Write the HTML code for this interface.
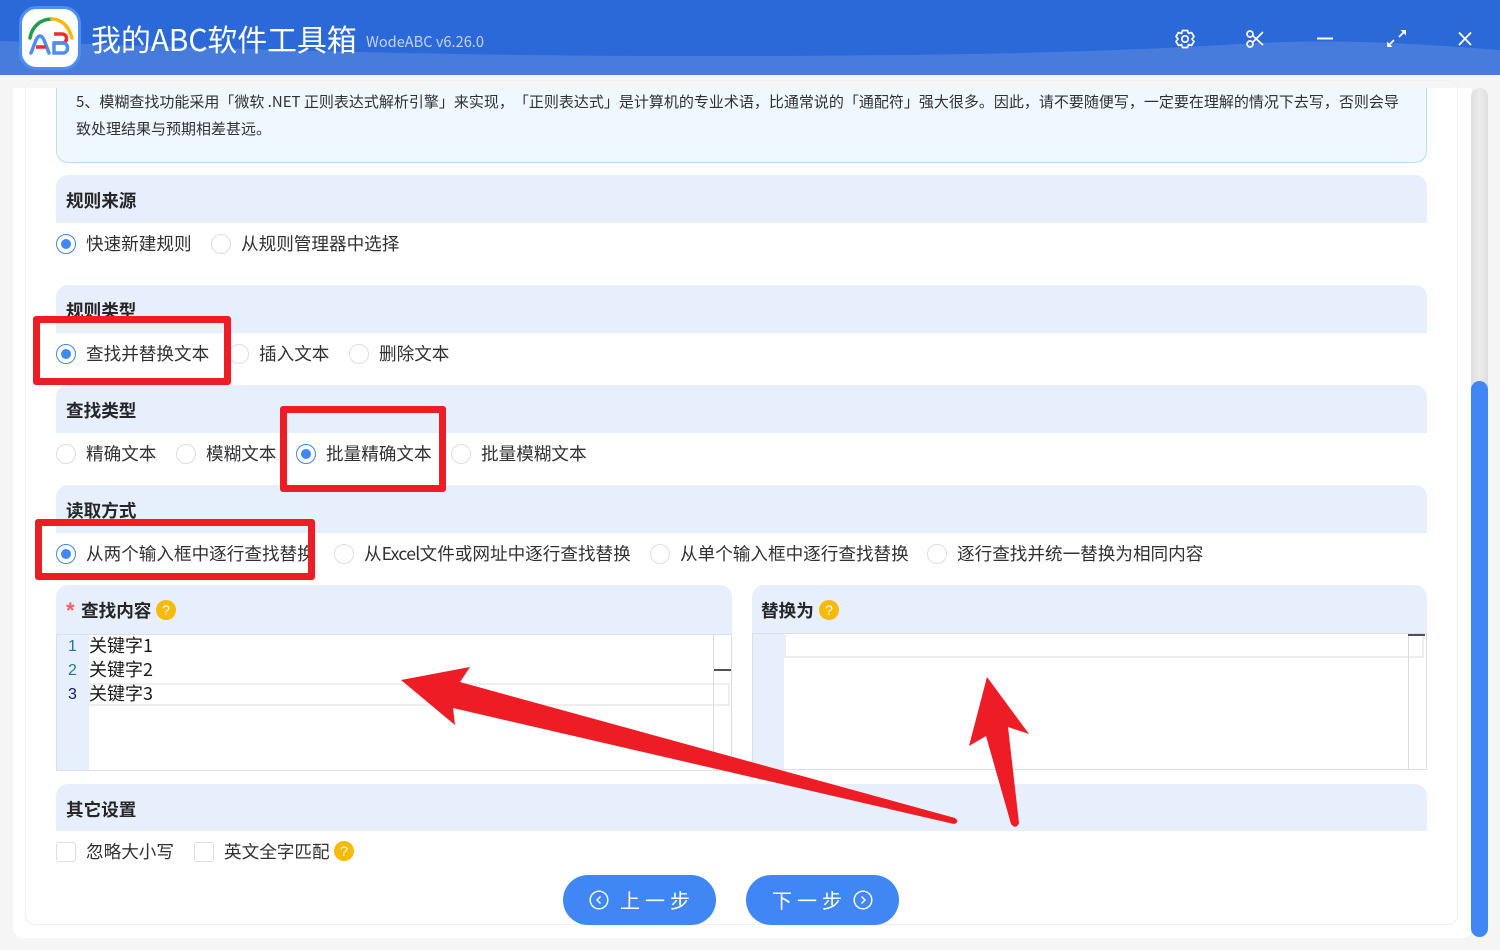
<!DOCTYPE html>
<html lang="zh"><head><meta charset="utf-8"><title>我的ABC软件工具箱</title>
<style>
*{box-sizing:border-box}
html,body{margin:0;padding:0;width:1500px;height:950px;overflow:hidden;background:#f5f5f5;font-family:"Liberation Sans","Noto Sans CJK SC",sans-serif;color:#303133}
.a{position:absolute}
.t{position:absolute;white-space:nowrap;font-family:"Noto Sans CJK SC",sans-serif;font-size:17.6px;line-height:24px;color:#303133;text-spacing-trim:space-all}
.h{position:absolute;background:#e7effc;left:56px;width:1371px;border-radius:12px 12px 0 0}
.b{font-weight:700;color:#262626;margin-top:1px}
.r{position:absolute;width:20px;height:20px;border:1px solid #dcdfe6;border-radius:50%;background:#fff}
.r.on{border-color:#4086f4}
.r.on:after{content:"";position:absolute;left:4px;top:4px;width:10px;height:10px;border-radius:50%;background:#4086f4}
.q{position:absolute;width:20px;height:20px;border-radius:50%;background:#f7bb07;color:#fff;font:14px/20px "Liberation Sans",sans-serif;text-align:center}
.c{position:absolute;width:20px;height:20px;border:1px solid #dcdfe6;border-radius:3px;background:#fff}
.box{position:absolute;border:7px solid #ee1c25;border-radius:3px}
.btn{position:absolute;top:875px;width:153px;height:50px;border-radius:25px;background:#4086f4;color:#fff;font:20px/50px "Noto Sans CJK SC",sans-serif;letter-spacing:5px}
.code{position:absolute;font:18px/24px "Noto Sans CJK SC",sans-serif;color:#1a1a1a;white-space:nowrap}
.n{position:absolute;font:16px/24px "Liberation Sans",sans-serif;color:#237893}
</style></head><body>
<div class="a" style="left:0;top:0;width:1500px;height:75px;background:#2b68d8"></div>
<svg class="a" style="left:0;top:0" width="1500" height="75"><path d="M0 41C180 47 420 56 680 56C860 56 1060 55 1240 44C1320 39 1400 42 1500 50V75H0Z" fill="#477cdc"/></svg>
<svg class="a" style="left:19px;top:6px" width="62" height="64" viewBox="0 0 62 64">
<rect x="1.5" y="1.5" width="59" height="61" rx="16" fill="#fff" stroke="#4c8ff0" stroke-width="3"/>
<path d="M11 32C13 20 22 13 33 13" fill="none" stroke="#1f9d48" stroke-width="3.500" stroke-linecap="round"/>
<path d="M33 13C43 13 50 21 53 32" fill="none" stroke="#f8b90c" stroke-width="3.500" stroke-linecap="round"/>
<path d="M12 47L17 34Q21 26 25 34L30 47" fill="none" stroke="#4c8ff0" stroke-width="3.500" stroke-linecap="round"/>
<path d="M17 41H27" stroke="#ee2d2d" stroke-width="3.500"/>
<path d="M35 28H43C49 28 49 37 43 37H35" fill="none" stroke="#ee2d2d" stroke-width="3.500"/>
<path d="M35 37H44C50 37 50 47 44 47H35Z" fill="none" stroke="#4c8ff0" stroke-width="3.500"/>
</svg>
<div class="t" style="left:91px;top:16px;font-size:30px;line-height:44px;color:#fff;letter-spacing:-.15px">我的ABC软件工具箱</div>
<div class="t" style="left:366px;top:31px;font-size:14.600px;line-height:22px;color:#c5d4f1">WodeABC v6.26.0</div>
<svg class="a" style="left:1170px;top:24px" width="310" height="30" fill="none" stroke="#fff" stroke-width="1.7">
<path d="M12.5 6.5L17.5 6.5L18.5 9.5L21.5 8.5L24 12.5L22 15L24 17.5L21.5 21.5L18.5 20.5L17.5 23.5L12.5 23.5L11.5 20.5L8.5 21.5L6 17.5L8 15L6 12.5L8.5 8.5L11.5 9.5Z" stroke-linejoin="round"/><circle cx="15" cy="15" r="3.2"/>
<circle cx="80" cy="10" r="3"/><circle cx="80" cy="20" r="3"/><path d="M82.5 11.5L93 21M82.5 18.5L93 8"/>
<path d="M147 14.500H163" stroke-width="2"/>
<path d="M218.500 21.500L224 16M229 13L234.500 7.500" stroke-width="1.700"/><path d="M217 23V17.500L222.500 23ZM236 6V11.500L230.500 6Z" fill="#fff" stroke="none"/>
<path d="M289 8.500L301 21M301 8.500L289 21" stroke-width="1.8"/>
</svg>

<div class="a" style="left:13px;top:88px;width:1459px;height:850px;background:#fff;border-radius:0 0 10px 10px"></div>
<div class="a" style="left:25px;top:80px;width:1433px;height:845px;border:1px solid #eef0f2;border-radius:10px"></div>
<div class="a" style="left:1471px;top:88px;width:17px;height:849px;background:linear-gradient(90deg,#dedede,#ececec 50%,#dedede);border-radius:8.500px"></div>
<div class="a" style="left:1471px;top:381px;width:17px;height:556px;background:#4086f4;border-radius:8.500px"></div>

<div class="a" style="left:56px;top:88px;width:1371px;height:75px;background:#eff7ff;border:1px solid #b8dcfd;border-top:0;border-radius:0 0 12px 12px"></div>
<div class="t" style="left:76px;top:88px;font-size:15px;line-height:27px;color:#303133">5、模糊查找功能采用「微软 .NET 正则表达式解析引擎」来实现，「正则表达式」是计算机的专业术语，比通常说的「通配符」强大很多。因此，请不要随便写，一定要在理解的情况下去写，否则会导</div>
<div class="t" style="left:76px;top:115px;font-size:15px;line-height:27px;color:#303133">致处理结果与预期相差甚远。</div>

<div class="h" style="top:175px;height:48px"></div>
<div class="t b" style="left:66px;top:188px">规则来源</div>
<div class="r on" style="left:56px;top:234px"></div><div class="t" style="left:86px;top:232px">快速新建规则</div>
<div class="r" style="left:211px;top:234px"></div><div class="t" style="left:241px;top:232px">从规则管理器中选择</div>

<div class="h" style="top:285px;height:48px"></div>
<div class="t b" style="left:66px;top:298px">规则类型</div>
<div class="r on" style="left:56px;top:344px"></div><div class="t" style="left:86px;top:342px">查找并替换文本</div>
<div class="r" style="left:229px;top:344px"></div><div class="t" style="left:259px;top:342px">插入文本</div>
<div class="r" style="left:349px;top:344px"></div><div class="t" style="left:379px;top:342px">删除文本</div>

<div class="h" style="top:385px;height:48px"></div>
<div class="t b" style="left:66px;top:398px">查找类型</div>
<div class="r" style="left:56px;top:444px"></div><div class="t" style="left:86px;top:442px">精确文本</div>
<div class="r" style="left:176px;top:444px"></div><div class="t" style="left:206px;top:442px">模糊文本</div>
<div class="r on" style="left:296px;top:444px"></div><div class="t" style="left:326px;top:442px">批量精确文本</div>
<div class="r" style="left:451px;top:444px"></div><div class="t" style="left:481px;top:442px">批量模糊文本</div>

<div class="h" style="top:485px;height:48px"></div>
<div class="t b" style="left:66px;top:498px">读取方式</div>
<div class="r on" style="left:56px;top:544px"></div><div class="t" style="left:86px;top:542px">从两个输入框中逐行查找替换</div>
<div class="r" style="left:334px;top:544px"></div><div class="t" style="left:364px;top:542px">从<span style="letter-spacing:-.7px">Excel</span>文件或网址中逐行查找替换</div>
<div class="r" style="left:650px;top:544px"></div><div class="t" style="left:680px;top:542px">从单个输入框中逐行查找替换</div>
<div class="r" style="left:927px;top:544px"></div><div class="t" style="left:957px;top:542px">逐行查找并统一替换为相同内容</div>

<div class="h" style="top:585px;width:676px;height:49px"></div>
<div class="a" style="left:66px;top:597px;color:#fb5b5b;font:700 22px/28px 'Liberation Sans',sans-serif">*</div>
<div class="t b" style="left:81px;top:598px">查找内容</div><div class="q" style="left:156px;top:600px">?</div>
<div class="a" style="left:56px;top:634px;width:676px;height:137px;border:1px solid #dcdfe6;background:#fff"></div>
<div class="a" style="left:57px;top:635px;width:32px;height:135px;background:#e7effc"></div>
<div class="n" style="left:68px;top:635px">1</div><div class="n" style="left:68px;top:659px">2</div><div class="n" style="left:68px;top:683px;color:#0b216f">3</div>
<div class="code" style="left:89px;top:633px">关键字1</div><div class="code" style="left:89px;top:657px">关键字2</div>
<div class="a" style="left:89px;top:683px;width:641px;height:23px;border:2px solid #eee"></div>
<div class="code" style="left:89px;top:681px">关键字3</div>
<div class="a" style="left:713px;top:635px;width:1px;height:135px;background:#dcdcdc"></div>
<div class="a" style="left:714px;top:669px;width:17px;height:2px;background:#505050"></div>

<div class="h" style="left:752px;top:585px;width:675px;height:48px"></div>
<div class="t b" style="left:761px;top:598px">替换为</div><div class="q" style="left:819px;top:600px">?</div>
<div class="a" style="left:752px;top:633px;width:675px;height:137px;border:1px solid #dcdfe6;background:#fff"></div>
<div class="a" style="left:753px;top:634px;width:31px;height:135px;background:#e7effc"></div>
<div class="a" style="left:784px;top:635px;width:640px;height:23px;border:2px solid #eee;border-top:0"></div>
<div class="a" style="left:1408px;top:634px;width:1px;height:135px;background:#dcdcdc"></div>
<div class="a" style="left:1408px;top:634px;width:17px;height:2px;background:#505050"></div>

<div class="h" style="top:784px;height:47px"></div>
<div class="t b" style="left:66px;top:797px">其它设置</div>
<div class="c" style="left:56px;top:842px"></div><div class="t" style="left:86px;top:840px">忽略大小写</div>
<div class="c" style="left:194px;top:842px"></div><div class="t" style="left:224px;top:840px">英文全字匹配</div><div class="q" style="left:334px;top:841px">?</div>

<div class="btn" style="left:563px"><svg class="a" style="left:26px;top:15px" width="20" height="20" fill="none" stroke="#fff" stroke-width="1.4"><circle cx="10" cy="10" r="8.800"/><path d="M11.500 6.500L8 10L11.500 13.500"/></svg><span class="a" style="left:57px;top:0;white-space:nowrap">上一步</span></div>
<div class="btn" style="left:746px"><span class="a" style="left:26px;top:0;white-space:nowrap">下一步</span><svg class="a" style="left:107px;top:15px" width="20" height="20" fill="none" stroke="#fff" stroke-width="1.4"><circle cx="10" cy="10" r="8.800"/><path d="M8.500 6.500L12 10L8.500 13.500"/></svg></div>

<div class="box" style="left:33px;top:316px;width:198px;height:69px"></div>
<div class="box" style="left:280px;top:406px;width:166px;height:86px"></div>
<div class="box" style="left:35px;top:519px;width:280px;height:61px"></div>
<svg class="a" style="left:0;top:0" width="1500" height="950"><path d="M401 680L470 667L460 682L955 818Q960 822 954 824L453 708L455 725Z" fill="#ee1c25"/><path d="M987 677L1029 734L1008 727L1019 823Q1016 830 1011 824L986 736L969 746Z" fill="#ee1c25"/></svg>
</body></html>
